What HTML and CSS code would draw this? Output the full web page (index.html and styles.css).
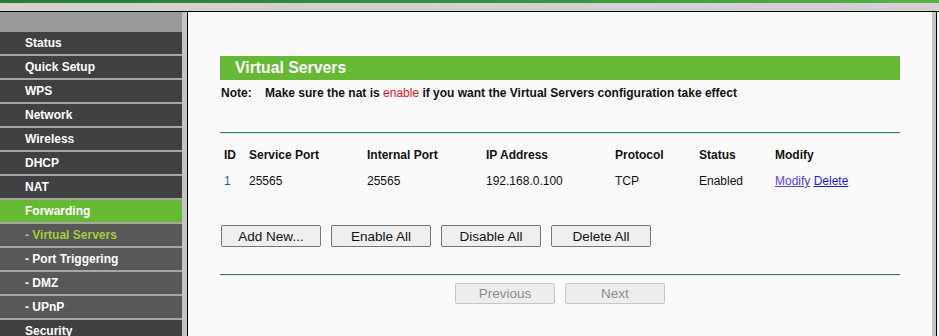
FILE: index.html
```html
<!DOCTYPE html>
<html lang="en">
<head>
    <meta charset="UTF-8">
    <title>Virtual Servers</title>
    <link rel="stylesheet" href="styles.css">
</head>
<body>
    <div class="top-band"></div>
    <div class="top-gap"></div>

    <div class="frame">
        <div class="sidebar">
            <div class="menu-head"></div>
            <ul class="menu">
                <li class="menu-item">Status</li>
                <li class="menu-item">Quick Setup</li>
                <li class="menu-item">WPS</li>
                <li class="menu-item">Network</li>
                <li class="menu-item">Wireless</li>
                <li class="menu-item">DHCP</li>
                <li class="menu-item">NAT</li>
                <li class="menu-item active">Forwarding</li>
                <li class="menu-item sub current">- Virtual Servers</li>
                <li class="menu-item sub">- Port Triggering</li>
                <li class="menu-item sub">- DMZ</li>
                <li class="menu-item sub">- UPnP</li>
                <li class="menu-item">Security</li>
            </ul>
        </div>
        <div class="divider"></div>

        <div class="content">
            <div class="title-bar">Virtual Servers</div>
            <div class="note">
                <span class="note-label">Note:</span>Make sure the nat is <span class="warn">enable</span> if you want the Virtual Servers configuration take effect
            </div>

            <div class="rule"></div>

            <table class="servers">
                <colgroup>
                    <col class="c-id">
                    <col class="c-sport">
                    <col class="c-iport">
                    <col class="c-ip">
                    <col class="c-proto">
                    <col class="c-status">
                    <col>
                </colgroup>
                <thead>
                    <tr>
                        <th>ID</th>
                        <th>Service Port</th>
                        <th>Internal Port</th>
                        <th>IP Address</th>
                        <th>Protocol</th>
                        <th>Status</th>
                        <th>Modify</th>
                    </tr>
                </thead>
                <tbody>
                    <tr>
                        <td class="id">1</td>
                        <td>25565</td>
                        <td>25565</td>
                        <td>192.168.0.100</td>
                        <td>TCP</td>
                        <td>Enabled</td>
                        <td><a href="#" class="visited">Modify</a> <a href="#">Delete</a></td>
                    </tr>
                </tbody>
            </table>

            <div class="actions">
                <button class="btn">Add New...</button>
                <button class="btn">Enable All</button>
                <button class="btn">Disable All</button>
                <button class="btn">Delete All</button>
            </div>

            <div class="rule rule-low"></div>

            <div class="pager">
                <button class="btn btn-pager" disabled>Previous</button>
                <button class="btn btn-pager" disabled>Next</button>
            </div>
        </div>

        <div class="right-edge"></div>
    </div>
</body>
</html>
```

FILE: styles.css
```css
body {
    margin: 0;
    width: 939px;
    height: 336px;
    overflow: hidden;
    font-family: "Liberation Sans", Arial, sans-serif;
    font-size: 12px;
    background: #fafafa;
}

.top-band {
    height: 3px;
    background: linear-gradient(90deg, #2b7a33 0%, #3b9440 60%, #5cb04a 100%);
}

.top-gap {
    height: 8px;
    background: #d2d2d2;
    border-bottom: 1px solid #000;
}

.frame {
    display: flex;
    height: 324px;
}

.sidebar {
    width: 182px;
    background: #a6a6a6;
}

.menu-head {
    height: 20px;
    background: #999999;
}

.menu {
    list-style: none;
    margin: 0;
    padding: 0;
    display: flex;
    flex-direction: column;
    gap: 2px;
}

.menu-item {
    height: 22px;
    line-height: 22px;
    padding-left: 25px;
    background: #404040;
    color: #ffffff;
    font-weight: bold;
}

.menu-item.active {
    background: #66b933;
}

.menu-item.sub {
    background: #585858;
}

.menu-item.current {
    color: #9fd13a;
}

.divider {
    width: 5px;
    background: #c4c4c4;
    border-right: 1px solid #000;
}

.content {
    width: 680px;
    padding: 44px 32px 0;
    background: #fafafa;
}

.right-edge {
    width: 4px;
    background: #c4c4c4;
    border-right: 1px solid #000;
}

.title-bar {
    height: 24px;
    line-height: 24px;
    padding-left: 15px;
    background: #66b933;
    color: #ffffff;
    font-size: 15.8px;
    font-weight: bold;
}

.note {
    margin-top: 6px;
    line-height: 14px;
    font-weight: bold;
    color: #111;
}

.note-label {
    display: inline-block;
    width: 44px;
    padding-left: 1px;
}

.warn {
    color: #e8141c;
    font-weight: normal;
}

.rule {
    margin-top: 32px;
    height: 1px;
    background: #2f8a4e;
    border-bottom: 1px solid #dfe6e0;
}

.servers {
    margin-top: 8px;
    width: 100%;
    border-collapse: collapse;
    table-layout: fixed;
    color: #111;
}

.servers th,
.servers td {
    height: 26px;
    padding: 0 0 0 4px;
    text-align: left;
    white-space: nowrap;
}

.servers th {
    font-weight: bold;
}

.servers td.id {
    color: #2a5a9a;
}

.c-id { width: 25px; }
.c-sport { width: 118px; }
.c-iport { width: 119px; }
.c-ip { width: 129px; }
.c-proto { width: 84px; }
.c-status { width: 76px; }

.servers a {
    color: #1a1aee;
}

.servers a.visited {
    color: #5a3ce6;
}

.actions {
    margin-top: 31px;
    display: flex;
    gap: 10px;
    padding-left: 1px;
}

.btn {
    width: 100px;
    height: 22px;
    padding: 0;
    font-family: "Liberation Sans", Arial, sans-serif;
    font-size: 13.5px;
    color: #111;
    background: #efefef;
    border: 1px solid #767676;
    border-radius: 2px;
}

.rule-low {
    margin-top: 27px;
}

.pager {
    margin-top: 7px;
    display: flex;
    justify-content: center;
    gap: 10px;
}

.btn-pager {
    height: 21px;
    color: #8c8c8c;
    background: #ededed;
    border-color: #c6c6c6;
}
```
